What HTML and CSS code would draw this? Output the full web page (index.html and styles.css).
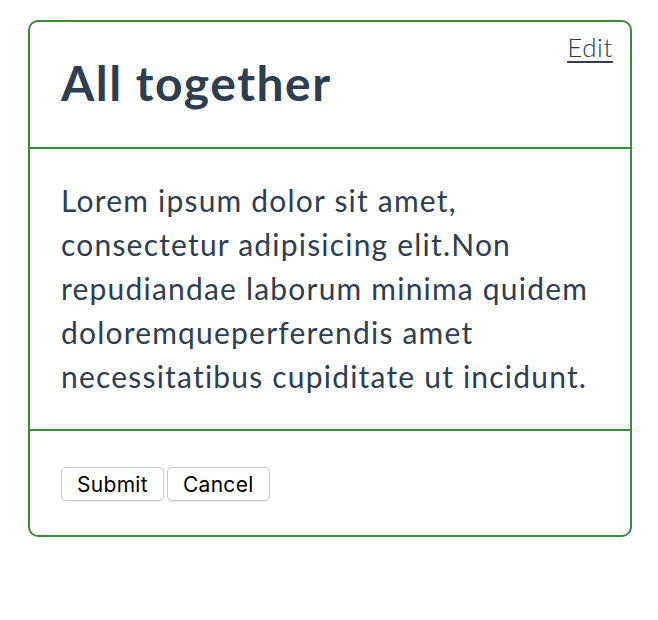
FILE: index.html
```html
<!DOCTYPE html>
<html>
<head>
<meta charset="utf-8">
<link rel="stylesheet" href="styles.css">
</head>
<body>
<div class="card">
  <div class="card-header">
    <h1 class="title">All together</h1>
    <a class="edit" href="#">Edit</a>
  </div>
  <div class="card-body">
    <p class="text">Lorem ipsum dolor sit amet,<br>consectetur adipisicing elit.Non<br>repudiandae laborum minima quidem<br>doloremqueperferendis amet<br>necessitatibus cupiditate ut incidunt.</p>
  </div>
  <div class="card-footer">
    <button class="btn">Submit</button>
    <button class="btn">Cancel</button>
  </div>
</div>
</body>
</html>
```
FILE: styles.css
```css
body {
  margin: 8px;
  background: #fff;
  font-family: Lato, "Open Sans", sans-serif;
  color: #2c3e50;
}
.card {
  position: relative;
  width: 600px;
  margin: 12px 0 0 20px;
  border: 2px solid #3b8a3b;
  border-radius: 10px;
}
.card-header {
  padding: 30px 31px 33px;
  border-bottom: 2px solid #3b8a3b;
}
.title {
  margin: 0;
  font-size: 48px;
  line-height: 62px;
  font-weight: 700;
  letter-spacing: 1.5px;
}
.edit {
  position: absolute;
  top: 10px;
  right: 17px;
  font-size: 26px;
  line-height: 30px;
  font-weight: 300;
  letter-spacing: 0.6px;
  color: #2c3e50;
  text-decoration: underline;
  text-decoration-thickness: 2px;
  text-underline-offset: 4px;
}
.card-body {
  padding: 29px 5px 31px 31px;
  border-bottom: 2px solid #3b8a3b;
}
.text {
  margin: 0;
  font-size: 30px;
  line-height: 44px;
  letter-spacing: 1.2px;
  white-space: nowrap;
}
.card-footer {
  display: flex;
  gap: 3px;
  padding: 36px 31px 34px;
}
.btn {
  font-family: Inter, "Liberation Sans", sans-serif;
  font-size: 21px;
  letter-spacing: 0.3px;
  height: 34px;
  padding: 0 15px;
  background: #fff;
  color: #000;
  border: 1px solid #c8c8c8;
  border-radius: 5px;
  box-shadow: 0 1px 1px rgba(0,0,0,0.08);
}
```
